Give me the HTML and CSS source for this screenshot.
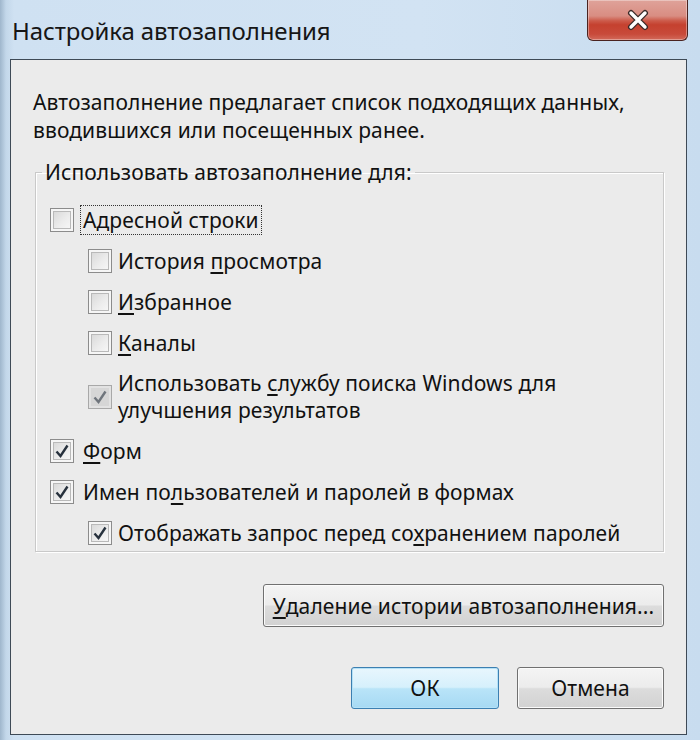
FILE: index.html
```html
<!DOCTYPE html>
<html lang="ru">
<head>
<meta charset="utf-8">
<title>Настройка автозаполнения</title>
<link rel="stylesheet" href="styles.css">
</head>
<body>
<div class="window">
  <div class="titlebar">
    <div class="title">Настройка автозаполнения</div>
    <div class="close">
      <svg width="30" height="24" viewBox="0 0 30 24"><path d="M8 5 L22 19 M22 5 L8 19" stroke="#3a2a28" stroke-width="6" stroke-linecap="round"/><path d="M8 5 L22 19 M22 5 L8 19" stroke="#ffffff" stroke-width="3.4" stroke-linecap="round"/></svg>
    </div>
  </div>
  <div class="client">
    <p class="desc">Автозаполнение предлагает список подходящих данных,<br>вводившихся или посещенных ранее.</p>
    <fieldset class="group">
      <legend>Использовать автозаполнение для:</legend>
      <div class="opt"><span class="cb"></span><span class="lbl focus">Адресной строки</span></div>
      <div class="opt sub"><span class="cb"></span><span class="lbl">История <u>п</u>росмотра</span></div>
      <div class="opt sub"><span class="cb"></span><span class="lbl"><u>И</u>збранное</span></div>
      <div class="opt sub"><span class="cb"></span><span class="lbl"><u>К</u>аналы</span></div>
      <div class="opt sub two"><span class="cb disabled"><svg width="16" height="16" viewBox="0 0 16 16"><path d="M2.5 8.5 L6.5 13 L13.5 2.5" fill="none" stroke="#6f757c" stroke-width="2.4"/></svg></span><span class="lbl">Использовать <u>с</u>лужбу поиска Windows для<br>улучшения результатов</span></div>
      <div class="opt"><span class="cb"><svg width="16" height="16" viewBox="0 0 16 16"><path d="M2.5 8.5 L6.5 13 L13.5 2.5" fill="none" stroke="#27313d" stroke-width="2.4"/></svg></span><span class="lbl"><u>Ф</u>орм</span></div>
      <div class="opt"><span class="cb"><svg width="16" height="16" viewBox="0 0 16 16"><path d="M2.5 8.5 L6.5 13 L13.5 2.5" fill="none" stroke="#27313d" stroke-width="2.4"/></svg></span><span class="lbl">Имен по<u>л</u>ьзователей и паролей в формах</span></div>
      <div class="opt sub"><span class="cb"><svg width="16" height="16" viewBox="0 0 16 16"><path d="M2.5 8.5 L6.5 13 L13.5 2.5" fill="none" stroke="#27313d" stroke-width="2.4"/></svg></span><span class="lbl">Отображать запрос перед со<u>х</u>ранением паролей</span></div>
    </fieldset>
    <div class="row-right">
      <button class="btn wide"><u>У</u>даление истории автозаполнения...</button>
    </div>
    <div class="actions">
      <button class="btn default">ОК</button>
      <button class="btn cancel">Отмена</button>
    </div>
  </div>
</div>
</body>
</html>
```

FILE: styles.css
```css
* { box-sizing: border-box; }
html, body { margin: 0; padding: 0; }
body {
  width: 700px;
  height: 740px;
  overflow: hidden;
  font-family: "Noto Sans", "Open Sans", sans-serif;
  color: #111;
}
.window {
  width: 700px;
  height: 740px;
  display: flex;
  flex-direction: column;
  background: linear-gradient(90deg, #9fb6cc 0px, #c3d7ea 6px, #cfe1f2 14px, #d2e3f3 60%, #c8dcef 100%);
}
.titlebar {
  height: 59px;
  display: flex;
  align-items: flex-start;
  padding: 0 12px 0 12px;
}
.title {
  margin-top: 15px;
  font-size: 24px;
  line-height: 32px;
  color: #161616;
  letter-spacing: -0.1px;
}
.close {
  margin-left: auto;
  width: 101px;
  height: 41px;
  border: 1px solid #4a2320;
  border-top: none;
  border-radius: 0 0 6px 6px;
  background: linear-gradient(180deg, #dfa39a 0%, #d98d82 40%, #cc5a4a 52%, #c5412f 62%, #c84a3a 85%, #d26a5b 100%);
  box-shadow: inset 0 0 0 1px rgba(255,255,255,0.35);
  display: flex;
  align-items: center;
  justify-content: center;
}
.client {
  margin: 0 13px 5px 10px;
  flex: 1;
  border: 1px solid #3e4a56;
  background: #ebebeb;
  padding: 28px 22px 0 23px;
  font-size: 21px;
  line-height: 28px;
  letter-spacing: 0.1px;
}
.desc {
  margin: 0 0 0 -1px;
  line-height: 28px;
}
.group {
  margin: 14px 0 0 1px;
  padding: 20px 10px 4px 14px;
  border: 1px solid #c9c9c9;
  box-shadow: inset 1px 1px 0 #ffffff, 1px 1px 0 #ffffff;
  display: flex;
  flex-direction: column;
  gap: 13px;
  min-width: 0;
}
.group legend {
  margin-left: -8px;
  padding: 0 3px;
  line-height: 28px;
}
.opt {
  display: flex;
  align-items: center;
  gap: 9px;
}
.opt.sub { margin-left: 38px; gap: 6px; }
.lbl { line-height: 28px; white-space: nowrap; }
.opt.two .lbl { line-height: 27px; }
.focus {
  outline: 1px dotted #333;
  outline-offset: 0px;
  padding: 0 2px;
  margin-left: -2px;
}
.cb {
  flex: none;
  width: 24px;
  height: 24px;
  border: 1px solid #8c8c8c;
  background: linear-gradient(135deg, #d4d4d4 0%, #ececec 55%, #fafafa 100%);
  box-shadow: inset 0 0 0 2px #f6f6f6, inset 0 0 0 3px #b9b9b9;
  display: flex;
  align-items: center;
  justify-content: center;
}
.cb svg { display: block; }
.cb.disabled {
  background: #d6d6d6;
  border-color: #a8a8a8;
  box-shadow: inset 0 0 0 2px #e2e2e2;
}
u { text-decoration: underline; text-underline-offset: 3px; }
.row-right {
  display: flex;
  justify-content: flex-end;
  margin-top: 32px;
}
.btn {
  font-family: inherit;
  font-size: 21px;
  letter-spacing: 0.1px;
  color: #111;
  height: 43px;
  border: 1px solid #707070;
  border-radius: 3px;
  background: linear-gradient(180deg, #f4f4f4 0%, #ececec 48%, #dcdcdc 52%, #d2d2d2 100%);
  box-shadow: inset 0 0 0 1px #fbfbfb;
  padding: 0;
  display: flex;
  align-items: center;
  justify-content: center;
}
.btn.wide { width: 401px; }
.actions {
  display: flex;
  justify-content: flex-end;
  gap: 18px;
  margin-top: 40px;
}
.btn.default {
  width: 148px;
  height: 42px;
  border-color: #3c7fb1;
  background: linear-gradient(180deg, #e8f6fd 0%, #d6f0fc 48%, #b9e4f8 52%, #a6d9f3 100%);
  box-shadow: inset 0 0 0 1px #b4e1f7;
}
.btn.cancel { width: 147px; height: 42px; }
```
